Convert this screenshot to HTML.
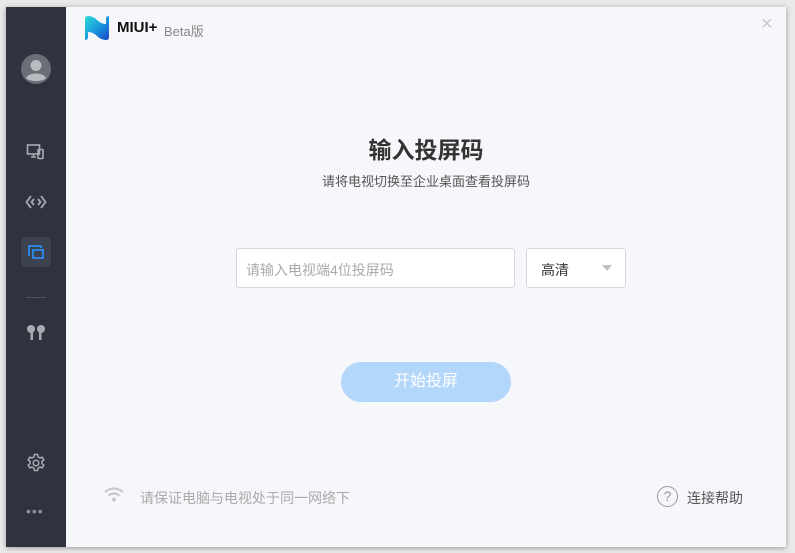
<!DOCTYPE html>
<html><head><meta charset="utf-8"><style>
*{margin:0;padding:0;box-sizing:border-box}
body{width:795px;height:553px;background:#e9e9ea;position:relative;overflow:hidden;font-family:"Liberation Sans","Noto Sans CJK SC",sans-serif}
.win{position:absolute;left:6px;top:7px;width:780px;height:540px;background:#f6f7fb;box-shadow:0 1px 5px rgba(0,0,0,.35)}
.side{position:absolute;left:0;top:0;width:60px;height:540px;background:#2f3340}
.abs{position:absolute}
.t{position:absolute;white-space:nowrap}
</style></head><body>
<div class="win">
 <div class="side">
  <svg class="abs" style="left:15px;top:47px" width="30" height="30" viewBox="0 0 30 30"><circle cx="15" cy="15" r="15" fill="#6b6e77"/><circle cx="15" cy="11.5" r="5.5" fill="#b9bbc0"/><path d="M5 24c3-6 17-6 20 0c-3 4-17 4-20 0z" fill="#b9bbc0"/></svg>
  <svg class="abs" style="left:20px;top:136px" width="20" height="20" viewBox="0 0 20 20" fill="none" stroke="#a8abb2" stroke-width="1.6"><rect x="1.5" y="2" width="12" height="9"/><path d="M5 14h5M7.5 11v3"/><rect x="12" y="6.5" width="5" height="9" rx="1"/></svg>
  <svg class="abs" style="left:19px;top:185px" width="22" height="20" viewBox="0 0 22 20" fill="none" stroke="#a8abb2" stroke-width="1.8"><path d="M6 4L1.5 10L6 16M16 4l4.5 6L16 16M9 7l-2.5 3L9 13M13 7l2.5 3L13 13"/></svg>
  <div class="abs" style="left:15px;top:230px;width:30px;height:30px;border-radius:4px;background:#3d4250"></div>
  <svg class="abs" style="left:20px;top:235px" width="20" height="20" viewBox="0 0 20 20" fill="none" stroke="#2a8cf0" stroke-width="1.8"><path d="M3 14V4h12v2"/><rect x="7" y="8" width="10" height="8"/></svg>
  <div class="abs" style="left:20px;top:290px;width:20px;height:1px;background:#4f5360"></div>
  <svg class="abs" style="left:19px;top:317px" width="22" height="18" viewBox="0 0 22 18" fill="#a8abb2"><circle cx="6" cy="5" r="4"/><rect x="5.5" y="5" width="2.5" height="11"/><circle cx="16" cy="5" r="4"/><rect x="14" y="5" width="2.5" height="11"/></svg>
  <svg class="abs" style="left:20px;top:446px" width="20" height="20" viewBox="0 0 20 20" fill="none" stroke="#a8abb2" stroke-width="1.5"><path d="M8.5 1.5h3l.6 2.4 1.8 1 2.4-.7 1.5 2.6-1.8 1.7v2l1.8 1.7-1.5 2.6-2.4-.7-1.8 1-.6 2.4h-3l-.6-2.4-1.8-1-2.4.7-1.5-2.6 1.8-1.7v-2L2.2 6.8l1.5-2.6 2.4.7 1.8-1z"/><circle cx="10" cy="10" r="2.8"/></svg>
  <div class="t" style="left:20px;top:496px;color:#8c8f97;font-size:14px;letter-spacing:1px">•••</div>
 </div>
 <svg class="abs" style="left:78px;top:8px" width="26" height="26" viewBox="0 0 26 26"><defs><linearGradient id="g" x1="0" y1="0" x2="1" y2="1"><stop offset="0" stop-color="#2fd9d0"/><stop offset="0.5" stop-color="#1a9be0"/><stop offset="1" stop-color="#1848c8"/></linearGradient></defs><path d="M1 4q0-3 3-3q5 0 9 4q4 4 9 4V4q0-3 3-3v21q0 3-3 3q-5 0-9-4q-4-4-9-4v5q0 3-3 3z" fill="url(#g)"/></svg>
 <div class="t" style="left:111px;top:12px;font-size:15px;font-weight:bold;color:#111">MIUI+</div>
 <div class="t" style="left:158px;top:14px;font-size:13px;color:#888">Beta版</div>
 <div class="t" style="left:755px;top:6px;font-size:20px;color:#c8c9cc;font-weight:200">×</div>
 <div class="t" style="left:60px;width:720px;top:124px;text-align:center;font-size:23px;font-weight:bold;color:#333">输入投屏码</div>
 <div class="t" style="left:60px;width:720px;top:164px;text-align:center;font-size:13px;color:#555">请将电视切换至企业桌面查看投屏码</div>
 <div class="abs" style="left:230px;top:241px;width:279px;height:40px;background:#fff;border:1px solid #d5d6da;border-radius:3px"></div>
 <div class="t" style="left:240px;top:253px;font-size:14px;color:#aaa">请输入电视端4位投屏码</div>
 <div class="abs" style="left:520px;top:241px;width:100px;height:40px;background:#fff;border:1px solid #d5d6da;border-radius:3px"></div>
 <div class="t" style="left:535px;top:253px;font-size:14px;color:#333">高清</div>
 <div class="abs" style="left:596px;top:258px;width:0;height:0;border-left:5px solid transparent;border-right:5px solid transparent;border-top:6px solid #c0c1c5"></div>
 <div class="abs" style="left:335px;top:355px;width:170px;height:40px;border-radius:20px;background:#b3d6fb;color:#fff;font-size:16px;text-align:center;line-height:40px">开始投屏</div>
 <svg class="abs" style="left:97px;top:480px" width="22" height="16" viewBox="0 0 22 16" fill="none" stroke="#c8c9cc" stroke-width="2.2"><path d="M2 5q9-7 18 0M5.5 8.5q5.5-4 11 0"/><circle cx="11" cy="12.5" r="2" fill="#c8c9cc" stroke="none"/></svg>
 <div class="t" style="left:134px;top:481px;font-size:14px;color:#aaa">请保证电脑与电视处于同一网络下</div>
 <div class="abs" style="left:651px;top:479px;width:21px;height:21px;border:1.3px solid #999;border-radius:50%;color:#999;font-size:14px;text-align:center;line-height:19px">?</div>
 <div class="t" style="left:681px;top:481px;font-size:14px;color:#555">连接帮助</div>
</div>
</body></html>
